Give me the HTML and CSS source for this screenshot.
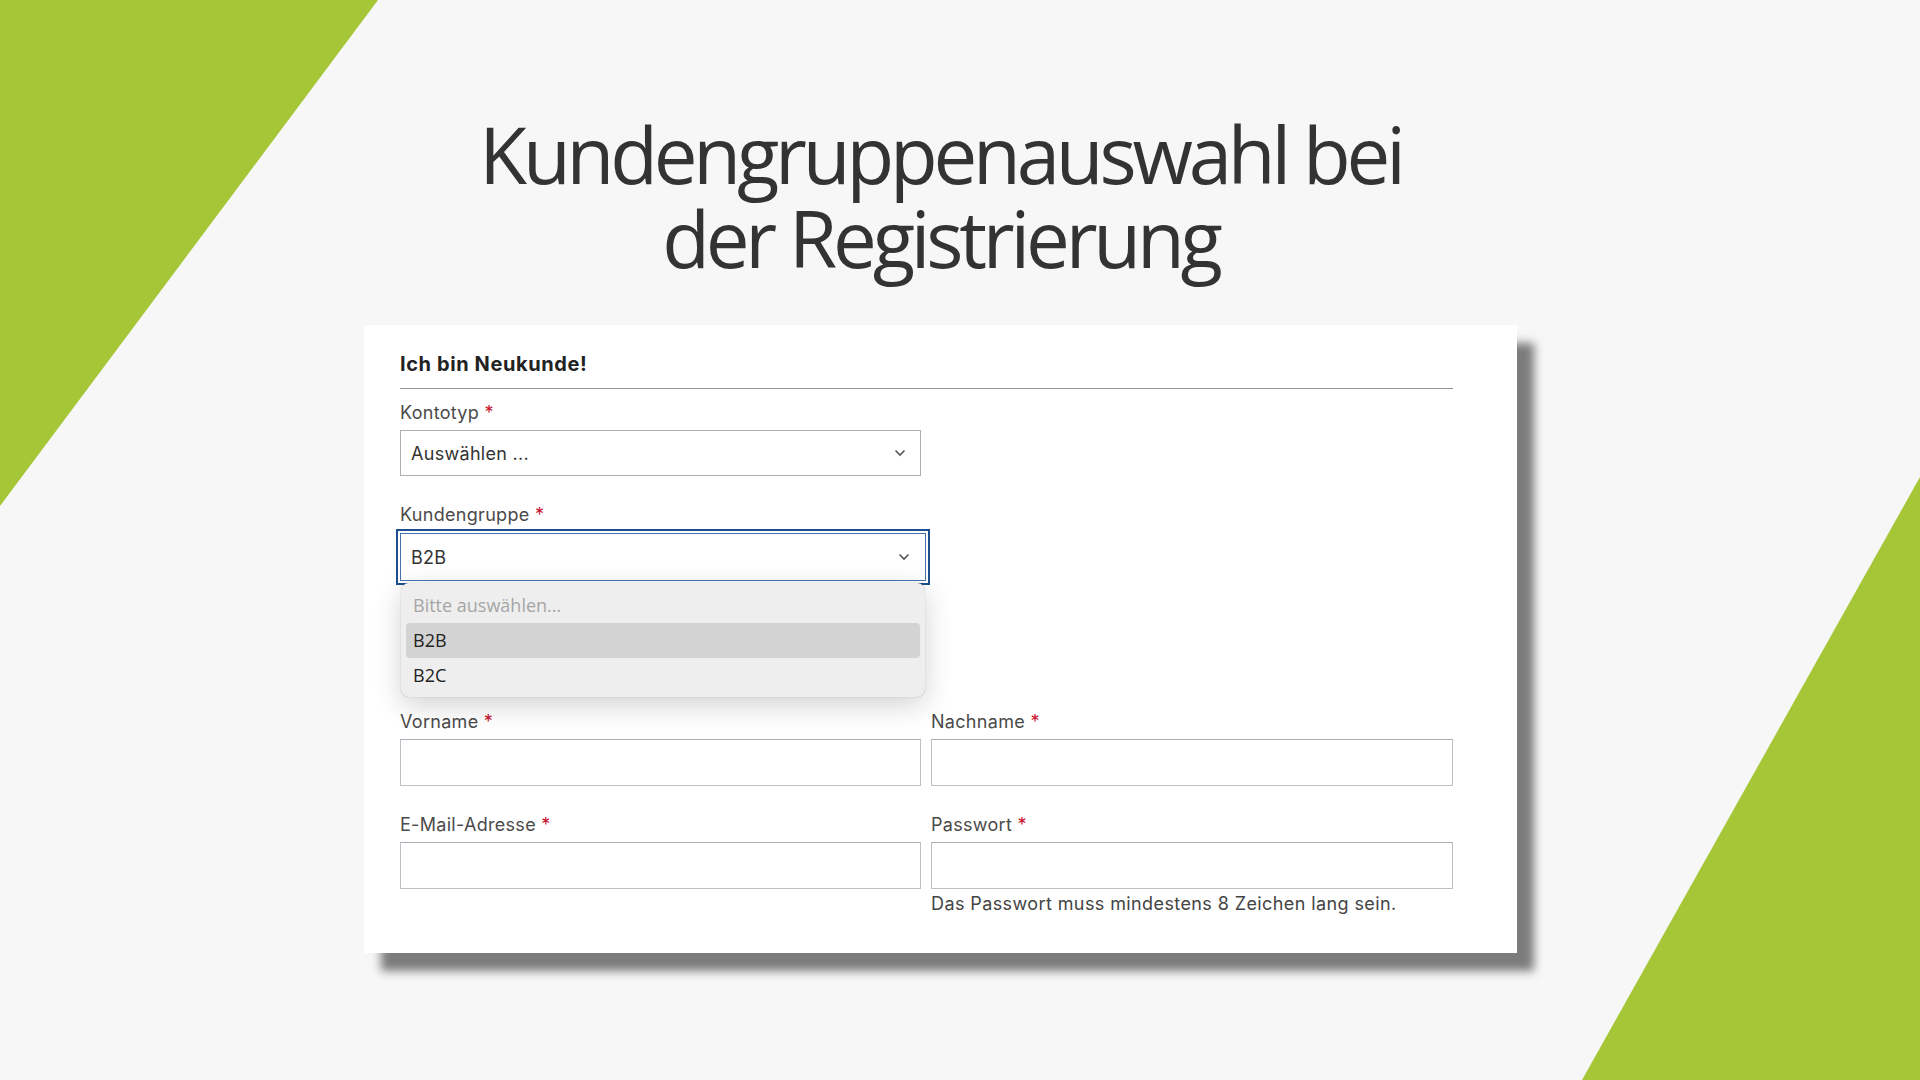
FILE: index.html
```html
<!DOCTYPE html>
<html lang="de">
<head>
    <meta charset="UTF-8">
    <meta name="viewport" content="width=device-width, initial-scale=1.0">
    <title>Kundengruppenauswahl bei der Registrierung</title>
    <link rel="stylesheet" href="styles.css">
</head>
<body>
    <div class="deco deco-left"></div>
    <div class="deco deco-right"></div>

    <div class="slide">
        <h1 class="title">Kundengruppenauswahl bei<br>der Registrierung</h1>

        <div class="card">
            <h2 class="card-title">Ich bin Neukunde!</h2>

            <div class="field">
                <label class="label">Kontotyp <span class="req">*</span></label>
                <div class="select-box">
                    <span>Auswählen ...</span>
                    <svg class="chevron" width="12" height="8" viewBox="0 0 12 8"><path d="M1.5 1.5 L6 6 L10.5 1.5" fill="none" stroke="#555" stroke-width="1.6"/></svg>
                </div>
            </div>

            <div class="field field-group">
                <label class="label">Kundengruppe <span class="req">*</span></label>
                <div class="select-box focused">
                    <span>B2B</span>
                    <svg class="chevron" width="12" height="8" viewBox="0 0 12 8"><path d="M1.5 1.5 L6 6 L10.5 1.5" fill="none" stroke="#555" stroke-width="1.6"/></svg>
                </div>
                <!-- geoeffnetes Auswahlmenue -->
                <ul class="dropdown">
                    <li class="placeholder">Bitte auswählen...</li>
                    <li class="active">B2B</li>
                    <li>B2C</li>
                </ul>
            </div>

            <div class="row">
                <div class="field">
                    <label class="label">Vorname <span class="req">*</span></label>
                    <input type="text" class="input">
                </div>
                <div class="field">
                    <label class="label">Nachname <span class="req">*</span></label>
                    <input type="text" class="input">
                </div>
            </div>

            <div class="row row-second">
                <div class="field">
                    <label class="label">E-Mail-Adresse <span class="req">*</span></label>
                    <input type="email" class="input">
                </div>
                <div class="field">
                    <label class="label">Passwort <span class="req">*</span></label>
                    <input type="password" class="input">
                    <p class="hint">Das Passwort muss mindestens 8 Zeichen lang sein.</p>
                </div>
            </div>
        </div>
    </div>
</body>
</html>
```

FILE: styles.css
```css
body {
    margin: 0;
    width: 1920px;
    height: 1080px;
    overflow: hidden;
    position: relative;
    background-color: #f7f7f7;
    font-family: Inter, "Liberation Sans", sans-serif;
}
.deco {
    position: absolute;
    background-color: #a5c637;
}
.deco-left {
    left: 0;
    top: 0;
    width: 378px;
    height: 506px;
    clip-path: polygon(0 0, 100% 0, 0 100%);
}
.deco-right {
    right: 0;
    bottom: 0;
    width: 338px;
    height: 603px;
    clip-path: polygon(100% 0, 100% 100%, 0 100%);
}
.slide {
    position: relative;
    width: 1153px;
    margin-left: 364px;
}
.title {
    margin: 112px 0 0;
    font-family: "Open Sans", sans-serif;
    font-weight: 400;
    font-size: 78px;
    line-height: 84px;
    letter-spacing: -4.2px;
    color: #333;
    text-align: center;
}
.card {
    margin-top: 45px;
    height: 628px;
    box-sizing: border-box;
    padding: 25px 64px 0 36px;
    background-color: #fff;
    box-shadow: 17px 18px 9px rgba(0,0,0,0.5);
}
.card-title {
    margin: 0;
    padding-bottom: 10px;
    font-size: 20px;
    line-height: 28px;
    letter-spacing: 0.6px;
    font-weight: 700;
    color: #222;
    border-bottom: 1px solid #8e959c;
}
.field {
    display: flex;
    flex-direction: column;
}
.field:first-of-type {
    margin-top: 12px;
}
.field-group {
    position: relative;
    margin-top: 27px;
    width: 526px;
}
.label {
    font-size: 18px;
    line-height: 24px;
    letter-spacing: 0.3px;
    color: #4a4a4a;
    margin-bottom: 5px;
}
.req {
    color: #c8102e;
}
.select-box {
    display: flex;
    align-items: center;
    justify-content: space-between;
    width: 521px;
    height: 46px;
    box-sizing: border-box;
    padding: 0 14px 0 10px;
    border: 1px solid #a9afb5;
    font-size: 18px;
    letter-spacing: 0.3px;
    color: #333;
}
.select-box.focused {
    width: 526px;
    height: 48px;
    margin-top: 1px;
    border-color: #4573ad;
    outline: 2px solid #1d4e8f;
    outline-offset: 2px;
    padding-right: 15px;
}
.dropdown {
    position: absolute;
    top: 100%;
    left: 1px;
    margin: 2px 0 0;
    width: 524px;
    box-sizing: border-box;
    padding: 5px 5px 4px;
    list-style: none;
    background-color: #eeeeee;
    border-radius: 8px;
    box-shadow: 0 8px 28px rgba(0,0,0,0.18), 0 0 1px rgba(0,0,0,0.35);
    font-family: "Open Sans", sans-serif;
    font-size: 18px;
    color: #222;
}
.dropdown li {
    height: 35px;
    line-height: 35px;
    padding-left: 7px;
    border-radius: 4px;
}
.dropdown .placeholder {
    color: #a6a6a6;
}
.dropdown .active {
    background-color: #d3d3d3;
}
.row {
    display: grid;
    grid-template-columns: 521px 522px;
    column-gap: 10px;
    margin-top: 129px;
}
.row .field {
    margin-top: 0;
}
.row-second {
    margin-top: 27px;
}
.input {
    height: 47px;
    box-sizing: border-box;
    border: 1px solid #bcc1c7;
    border-top-color: #a9aeb4;
    margin: 0;
    padding: 0 10px;
    font-size: 17px;
}
.hint {
    margin: 4px 0 0;
    font-size: 18px;
    line-height: 22px;
    letter-spacing: 0.4px;
    color: #444;
}
```
